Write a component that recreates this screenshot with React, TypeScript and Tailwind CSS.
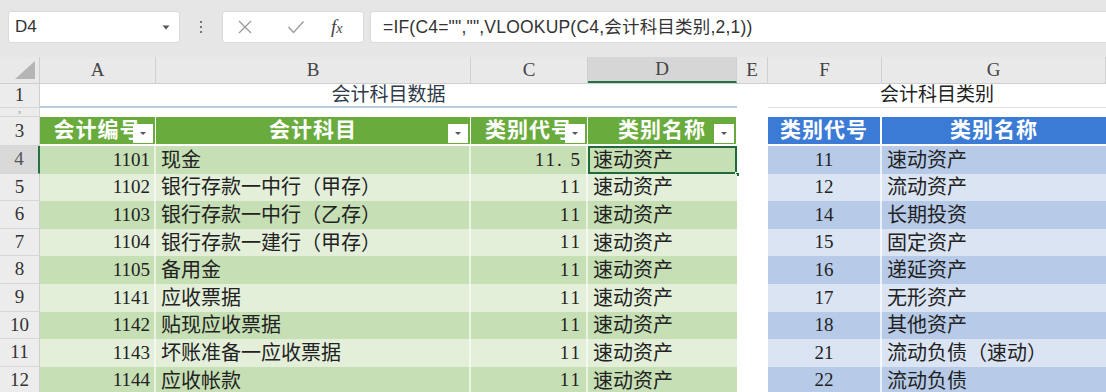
import React from 'react';

const serif = { fontFamily: '"Liberation Serif", "Noto Sans CJK SC", serif' };
const cjk = { fontFamily: '"Liberation Serif", "Noto Sans CJK SC", sans-serif' };

const cols = ['A', 'B', 'C', 'D', 'E', 'F', 'G'];
const widths = ['w-[116px]', 'w-[315px]', 'w-[117px]', 'w-[149px]', 'w-[31px]', 'w-[114px]', 'w-[224px]'];

const left = [
  ['1101', '现金', '11.5', '速动资产'],
  ['1102', '银行存款一中行（甲存）', '11', '速动资产'],
  ['1103', '银行存款一中行（乙存）', '11', '速动资产'],
  ['1104', '银行存款一建行（甲存）', '11', '速动资产'],
  ['1105', '备用金', '11', '速动资产'],
  ['1141', '应收票据', '11', '速动资产'],
  ['1142', '贴现应收票据', '11', '速动资产'],
  ['1143', '坏账准备一应收票据', '11', '速动资产'],
  ['1144', '应收帐款', '11', '速动资产'],
];

const right = [
  ['11', '速动资产'],
  ['12', '流动资产'],
  ['14', '长期投资'],
  ['15', '固定资产'],
  ['16', '递延资产'],
  ['17', '无形资产'],
  ['18', '其他资产'],
  ['21', '流动负债（速动）'],
  ['22', '流动负债'],
];

function Drop() {
  return (
    <div className="absolute right-[2px] top-[7px] w-[20px] h-[19px] bg-white flex items-center justify-center">
      <svg width="8" height="5" viewBox="0 0 8 5"><path d="M1 1h6L4 4z" fill="#555" /></svg>
    </div>
  );
}

function RowHead({ n, active, h }: { n: string; active?: boolean; h: string }) {
  return (
    <div
      className={`w-[40px] shrink-0 ${h} flex items-center justify-center border-b border-[#d6d6d6] text-[19px] ${active ? 'bg-[#d9d9d9] text-[#555] border-r-2 border-r-[#217346]' : 'bg-[#ececec] text-[#333] border-r border-r-[#cfcfcf]'}`}
      style={serif}
    >
      {n}
    </div>
  );
}

export default function App() {
  return (
    <div className="w-[1106px] h-[392px] overflow-hidden bg-white" style={cjk}>
      {/* formula bar */}
      <div className="h-[57px] bg-[#e6e6e6] flex items-start pt-[11px]">
        <div className="ml-[8px] w-[172px] h-[32px] bg-white rounded-[3px] border border-[#dadada] flex items-center justify-between pl-[6px] pr-[9px]">
          <span className="text-[17px] text-[#333]" style={{ fontFamily: '"Liberation Sans", sans-serif' }}>D4</span>
          <svg width="8" height="5" viewBox="0 0 8 5"><path d="M0.5 0.5h7L4 4.5z" fill="#555" /></svg>
        </div>
        <div className="w-[42px] h-[32px] flex flex-col items-center justify-center gap-[3px]">
          <div className="w-[2px] h-[2px] bg-[#777]" />
          <div className="w-[2px] h-[2px] bg-[#777]" />
          <div className="w-[2px] h-[2px] bg-[#777]" />
        </div>
        <div className="w-[142px] h-[32px] bg-white rounded-[3px] border border-[#dadada] flex items-center">
          <svg className="ml-[14px]" width="16" height="16" viewBox="0 0 16 16"><path d="M2 2l12 12M14 2L2 14" stroke="#9a9a9a" strokeWidth="1.3" /></svg>
          <svg className="ml-[34px]" width="18" height="14" viewBox="0 0 18 14"><path d="M1.5 7l5 5.5L16.5 1.5" stroke="#9a9a9a" strokeWidth="1.3" fill="none" /></svg>
          <span className="ml-[26px] italic text-[19px] text-[#444]" style={{ fontFamily: '"Liberation Serif", serif' }}>f<span className="text-[14px]">x</span></span>
        </div>
        <div className="ml-[6px] flex-1 h-[32px] bg-white rounded-l-[3px] border border-r-0 border-[#dadada] flex items-center pl-[12px]">
          <span className="text-[17.5px] text-[#333] tracking-[0.2px]" style={{ fontFamily: '"Liberation Sans", "Noto Sans CJK SC", sans-serif' }}>
            =IF(C4="","",VLOOKUP(C4,会计科目类别,2,1))
          </span>
        </div>
      </div>

      {/* column headers */}
      <div className="flex h-[27px] bg-[#e9e9e9] border-b border-[#cfcfcf]">
        <div className="w-[40px] shrink-0 flex items-end justify-end pr-[4px] pb-[4px] border-r border-[#cfcfcf]">
          <svg width="20" height="18" viewBox="0 0 20 18"><path d="M20 0V18H0z" fill="#b5b5b5" /></svg>
        </div>
        {cols.map((c, i) => (
          <div
            key={c}
            className={`${widths[i]} shrink-0 flex items-center justify-center text-[19px] text-[#444] border-r border-[#d0d0d0] ${c === 'D' ? 'bg-[#d6d6d6] border-b-2 border-b-[#217346]' : ''}`}
            style={serif}
          >
            {c}
          </div>
        ))}
      </div>

      {/* row 1 */}
      <div className="flex h-[24px]">
        <RowHead n="1" h="h-[24px]" />
        <div className="w-[697px] shrink-0 flex items-center justify-center text-[19px] text-[#2d3a48] border-b-2 border-[#b5cfe0]">会计科目数据</div>
        <div className="w-[31px] shrink-0" />
        <div className="w-[338px] shrink-0 flex items-center justify-center text-[19px] text-[#222] border-b border-[#e3e3e3]">会计科目类别</div>
      </div>

      {/* row 2 */}
      <div className="flex h-[9px]">
        <div className="w-[40px] shrink-0 h-[9px] bg-[#ececec] border-b border-r border-[#d6d6d6] flex items-center justify-center text-[5px] text-[#555] leading-none">2</div>
        <div className="flex-1" />
      </div>

      {/* row 3: table headers */}
      <div className="flex h-[29px]">
        <RowHead n="3" h="h-[29px]" />
        {['会计编号', '会计科目', '类别代号', '类别名称'].map((t, i) => (
          <div key={t} className={`${widths[i]} shrink-0 h-[29px] border-b-2 border-white border-r border-r-white/70`}>
            <div className="relative h-full bg-[#6aab3d] flex items-center justify-center overflow-hidden">
              <span className="text-[21px] font-bold text-white tracking-[1px] whitespace-nowrap">{t}</span>
              <Drop />
            </div>
          </div>
        ))}
        <div className="w-[31px] shrink-0" />
        {['类别代号', '类别名称'].map((t, i) => (
          <div key={t} className={`${widths[5 + i]} shrink-0 h-[29px] border-b-2 border-white ${i === 0 ? 'border-r-2 border-r-white' : ''}`}>
            <div className="h-full bg-[#3b7bd6] flex items-center justify-center">
              <span className="text-[21px] font-bold text-white tracking-[1px]">{t}</span>
            </div>
          </div>
        ))}
      </div>

      {/* data rows */}
      {left.map((r, i) => {
        const dark = i % 2 === 0;
        const g = dark ? 'bg-[#c6dfb4]' : 'bg-[#e3efd9]';
        const b = dark ? 'bg-[#b7cbe8]' : 'bg-[#dbe4f3]';
        return (
          <div key={r[0]} className="flex h-[27.6px]">
            <RowHead n={String(i + 4)} active={i === 0} h="h-[27.6px]" />
            <div className={`w-[116px] shrink-0 ${g} border-r-2 border-white/60 flex items-center justify-end pr-[4px] text-[19px] text-[#222]`} style={serif}>{r[0]}</div>
            <div className={`w-[315px] shrink-0 ${g} border-r-2 border-white/60 flex items-center pl-[5px] text-[20px] text-[#222] whitespace-nowrap`}>{r[1]}</div>
            <div className={`w-[117px] shrink-0 ${g} border-r-2 border-white/60 flex items-center justify-end pr-[4px] text-[19px] text-[#222] tracking-[2px]`} style={serif}>{r[2] === '11.5' ? '11. 5' : r[2]}</div>
            <div className={`relative w-[149px] shrink-0 ${g} flex items-center pl-[5px] text-[20px] text-[#222]`}>
              {r[3]}
              {i === 0 && (
                <>
                  <div className="absolute inset-0 border-2 border-[#1f6b3a]" />
                  <div className="absolute right-[-3px] bottom-[-3px] w-[5px] h-[5px] bg-[#1f6b3a] border border-white" />
                </>
              )}
            </div>
            <div className="w-[31px] shrink-0 bg-white" />
            <div className={`w-[114px] shrink-0 ${b} border-r-2 border-white/70 flex items-center justify-center text-[19px] text-[#222]`} style={serif}>{right[i][0]}</div>
            <div className={`w-[224px] shrink-0 ${b} flex items-center pl-[5px] text-[20px] text-[#222] whitespace-nowrap`}>{right[i][1]}</div>
          </div>
        );
      })}
    </div>
  );
}
